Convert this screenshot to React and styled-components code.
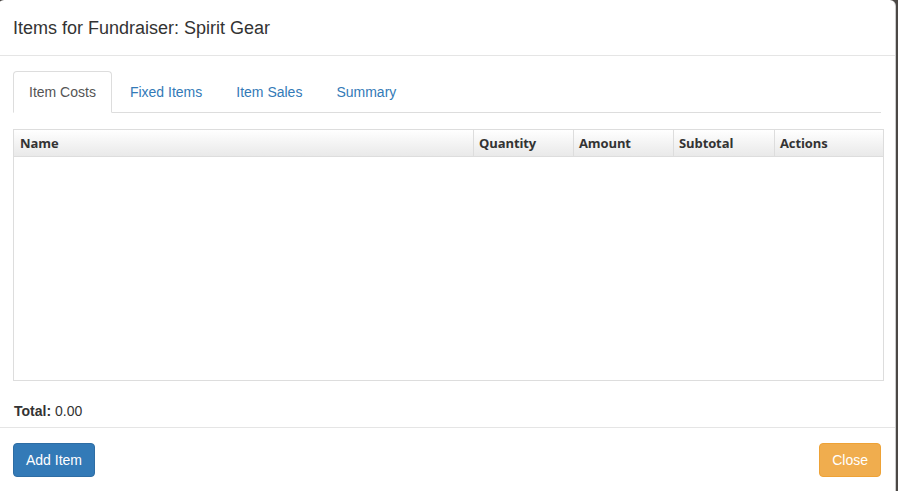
import React, { useState } from "react";
import styled, { createGlobalStyle } from "styled-components";

const GlobalStyle = createGlobalStyle`
  html, body {
    margin: 0;
    padding: 0;
    background: #4b4845;
    font-family: "Liberation Sans", Arial, sans-serif;
    font-size: 14px;
    color: #333;
  }
`;

const Backdrop = styled.div`
  width: 898px;
  height: 491px;
  overflow: hidden;
  display: flex;
  align-items: flex-start;
`;

const Modal = styled.div`
  width: 897px;
  height: 500px;
  margin-left: -2px;
  background: #fff;
  border-radius: 6px;
  border-right: 1px solid rgba(0, 0, 0, 0.2);
  display: flex;
  flex-direction: column;
`;

const Header = styled.div`
  padding: 15px 15px 14px;
  border-bottom: 1px solid #e5e5e5;
`;

const Title = styled.h4`
  margin: 0;
  font-size: 18px;
  font-weight: normal;
  line-height: 26px;
  color: #333;
`;

const Body = styled.div`
  padding: 15px 11px 0 15px;
`;

const Tabs = styled.ul`
  list-style: none;
  margin: 0 3px 0 0;
  padding: 0;
  display: flex;
  border-bottom: 1px solid #ddd;
`;

const Tab = styled.li`
  margin-bottom: -1px;
  margin-right: 2px;
  padding: 10px 15px;
  line-height: 20px;
  font-size: 14px;
  border: 1px solid ${(p) => (p.active ? "#ddd" : "transparent")};
  border-bottom-color: ${(p) => (p.active ? "#fff" : "transparent")};
  border-radius: 4px 4px 0 0;
  background: ${(p) => (p.active ? "#fff" : "transparent")};
  color: ${(p) => (p.active ? "#555" : "#337ab7")};
  cursor: pointer;
`;

const Table = styled.div`
  margin-top: 16px;
  border: 1px solid #ddd;
  height: 250px;
  display: flex;
  flex-direction: column;
`;

const HeadRow = styled.div`
  display: grid;
  grid-template-columns: 459px 100px 100px 101px 1fr;
  height: 26px;
  border-bottom: 1px solid #ddd;
  background: linear-gradient(to bottom, #ffffff 0%, #e9e9e9 100%);
`;

const HeadCell = styled.div`
  display: flex;
  align-items: center;
  font-family: "Open Sans", "DejaVu Sans", sans-serif;
  font-weight: 700;
  font-size: 13px;
  letter-spacing: -0.1px;
  color: #333;
  border-left: ${(p) => (p.first ? "none" : "1px solid #ddd")};
  padding: 0 5px 0 ${(p) => (p.first ? "6px" : "5px")};
`;

const Total = styled.div`
  padding: 20px 1px 6px;
  line-height: 20px;
  font-size: 14px;

  b {
    font-weight: 700;
  }
`;

const Footer = styled.div`
  border-top: 1px solid #e5e5e5;
  padding: 15px 14px 15px 15px;
  display: flex;
  justify-content: space-between;
`;

const Button = styled.button`
  font-family: "Liberation Sans", Arial, sans-serif;
  font-size: 14px;
  line-height: 20px;
  padding: 6px 12px;
  border-radius: 4px;
  color: #fff;
  cursor: pointer;
  background: ${(p) => (p.variant === "warning" ? "#f0ad4e" : "#337ab7")};
  border: 1px solid ${(p) => (p.variant === "warning" ? "#eea236" : "#2e6da4")};
`;

const columns = ["Name", "Quantity", "Amount", "Subtotal", "Actions"];
const tabs = ["Item Costs", "Fixed Items", "Item Sales", "Summary"];

const App = () => {
  const [activeTab, setActiveTab] = useState("Item Costs");

  return (
    <>
      <GlobalStyle />
      <Backdrop>
        <Modal>
          <Header>
            <Title>Items for Fundraiser: Spirit Gear</Title>
          </Header>
          <Body>
            <Tabs>
              {tabs.map((t) => (
                <Tab key={t} active={activeTab === t} onClick={() => setActiveTab(t)}>
                  {t}
                </Tab>
              ))}
            </Tabs>
            <Table>
              <HeadRow>
                {columns.map((c, i) => (
                  <HeadCell key={c} first={i === 0}>
                    {c}
                  </HeadCell>
                ))}
              </HeadRow>
            </Table>
            <Total>
              <b>Total:</b> 0.00
            </Total>
          </Body>
          <Footer>
            <Button>Add Item</Button>
            <Button variant="warning">Close</Button>
          </Footer>
        </Modal>
      </Backdrop>
    </>
  );
};

export default App;
